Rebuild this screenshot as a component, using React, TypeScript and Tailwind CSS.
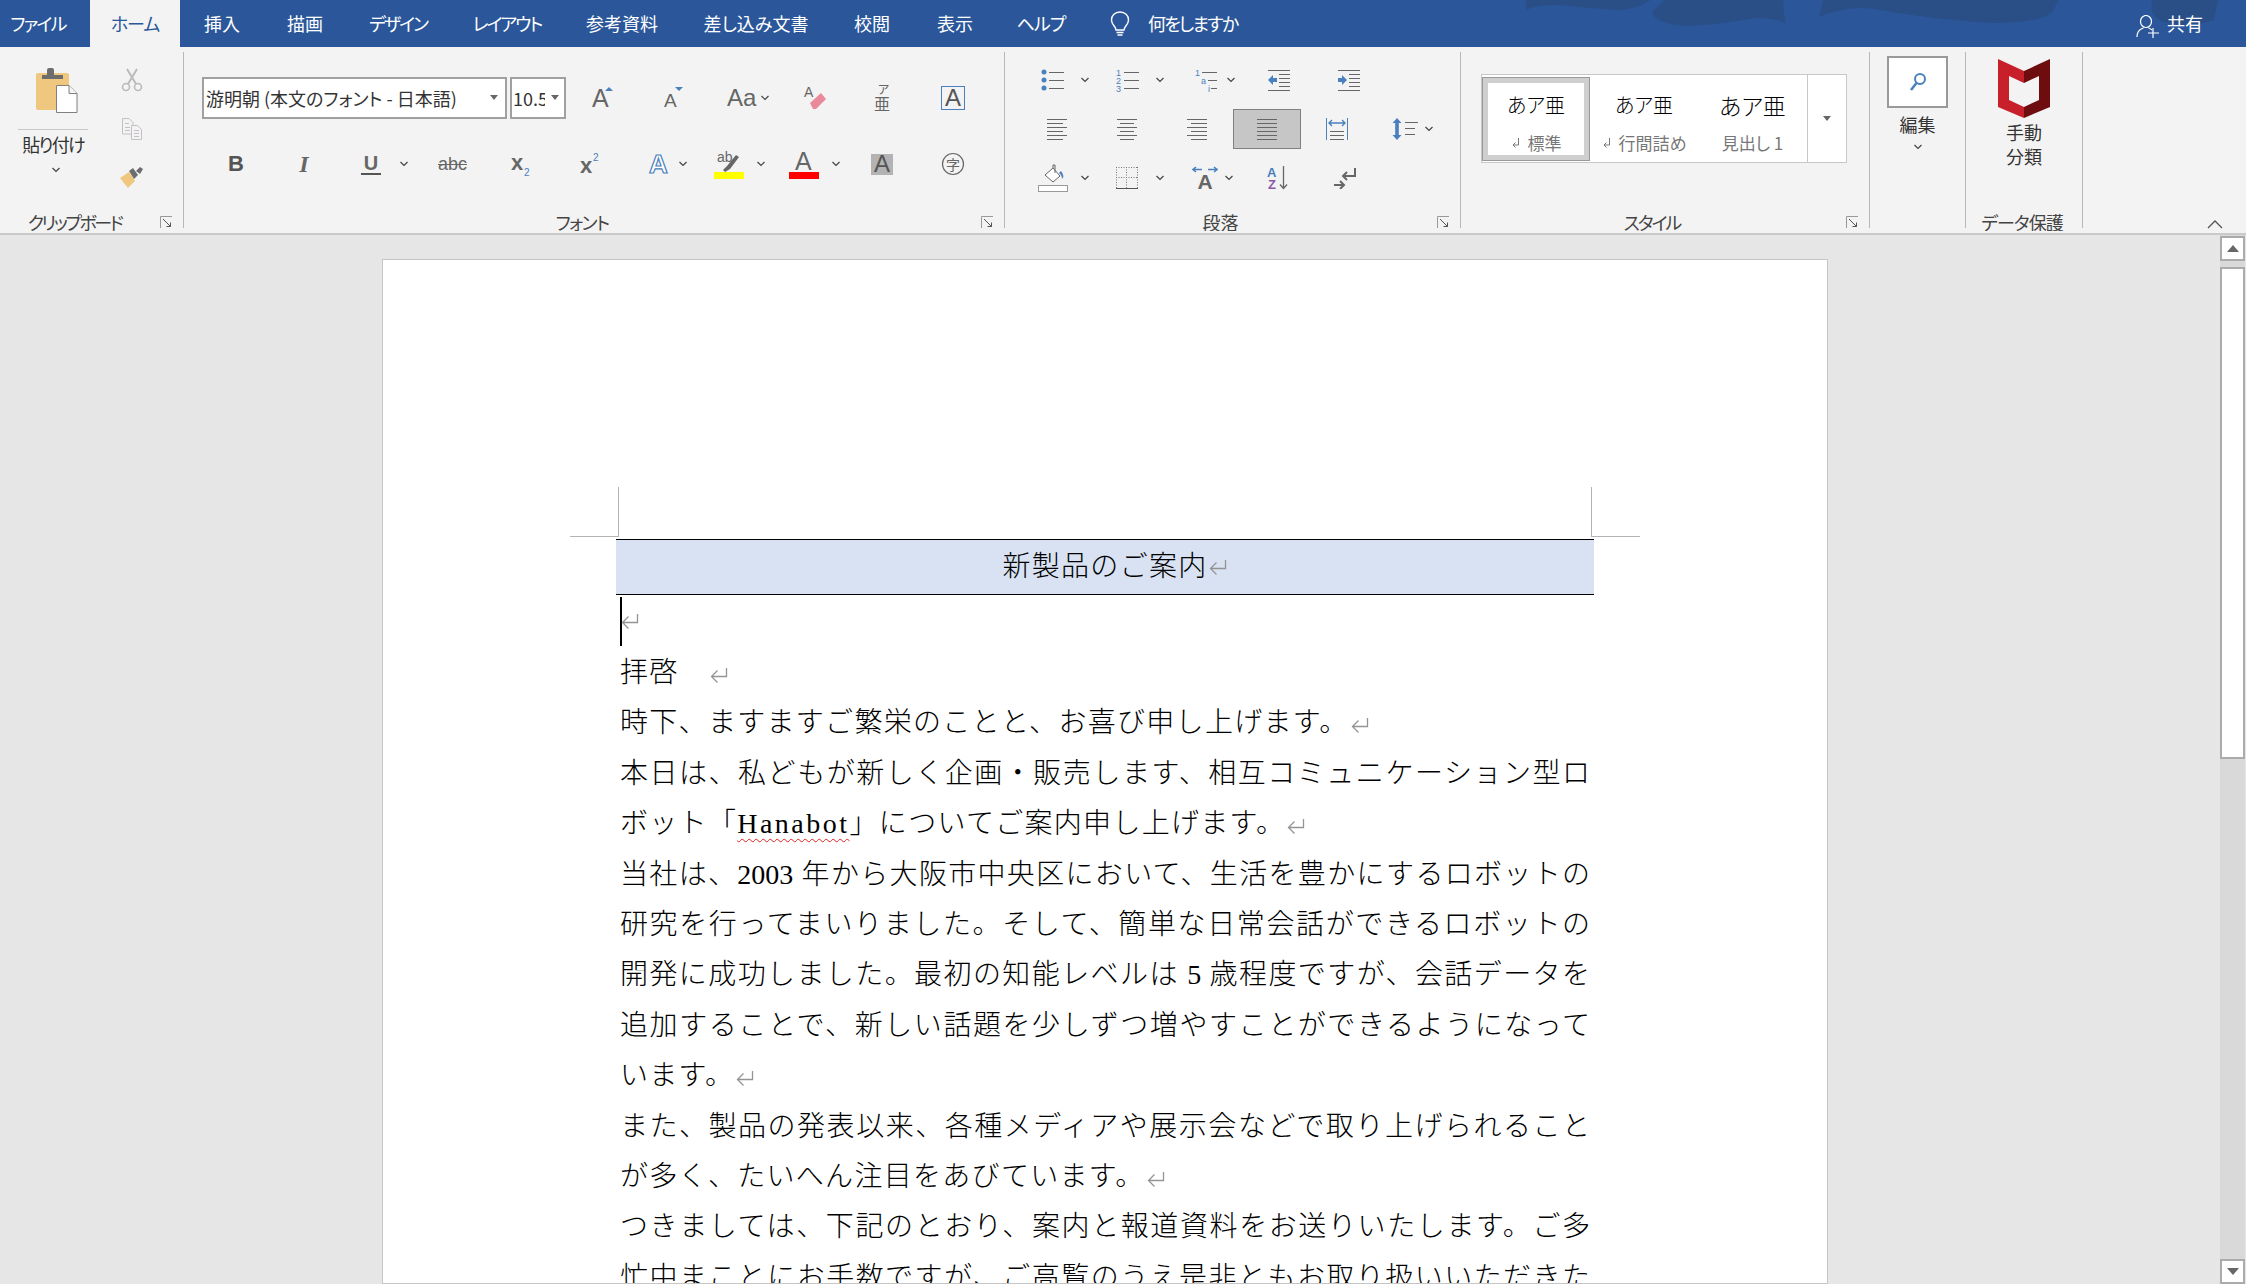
import type { ReactNode } from 'react';

const SANS = 'Liberation Sans';
const CJK = 'Noto Sans CJK JP';
const GRAY = '#666666';
const BLUE = '#4a80bd';

const TABS: { label: string; width: string; active?: boolean }[] = [
  { label: 'ファイル', width: 'w-[76px] mr-[14px] tracking-[-1.8px]' },
  { label: 'ホーム', width: 'w-[90px] tracking-[-1px]', active: true },
  { label: '挿入', width: 'w-[84px]' },
  { label: '描画', width: 'w-[82px]' },
  { label: 'デザイン', width: 'w-[104px] tracking-[-2px]' },
  { label: 'レイアウト', width: 'w-[114px] tracking-[-2px]' },
  { label: '参考資料', width: 'w-[116px]' },
  { label: '差し込み文書', width: 'w-[152px]' },
  { label: '校閲', width: 'w-[80px]' },
  { label: '表示', width: 'w-[86px]' },
  { label: 'ヘルプ', width: 'w-[86px] tracking-[-1px]' },
];

function Chev({ className = '' }: { className?: string }) {
  return (
    <svg width="10" height="6" viewBox="0 0 10 6" className={`shrink-0 ${className}`}>
      <path d="M1.5 1 5 4.5 8.5 1" fill="none" stroke="#444" strokeWidth="1.2" />
    </svg>
  );
}

function Launcher() {
  return (
    <svg width="13" height="13" viewBox="0 0 13 13" className="absolute right-[10px] top-[14px]">
      <path d="M.5 12V.5H12" fill="none" stroke="#999" />
      <path d="M3 3l7.5 7.5M10.5 6.5v4h-4" fill="none" stroke="#555" />
    </svg>
  );
}

function Lines({ short }: { short: [number, number] }) {
  return (
    <svg width="24" height="24" viewBox="0 0 24 24" className="shrink-0">
      {[2, 6, 10, 14, 18, 22].map((y, i) => (
        <path
          key={y}
          d={i % 2 === 0 ? `M2 ${y + 0.5}H22` : `M${short[0]} ${y + 0.5}H${short[1]}`}
          stroke={GRAY}
        />
      ))}
    </svg>
  );
}

function Paste() {
  return (
    <svg width="42" height="46" viewBox="0 0 42 46" className="shrink-0">
      <rect x="0" y="5" width="33" height="37" rx="2" fill="#efc77f" />
      <path d="M6 11V7H11V2Q11 0 13 0H16Q18 0 18 2V7H27V11Z" fill="#6d6d6d" />
      <path d="M20.5 17.5H33L41 25.5V44.5H20.5Z" fill="#fff" stroke="#808080" />
      <path d="M33 17.5V25.5H41" fill="#f3f3f3" stroke="#808080" />
    </svg>
  );
}

function Scissors() {
  return (
    <svg width="22" height="24" viewBox="0 0 22 24" className="shrink-0">
      <circle cx="5" cy="19" r="3.5" fill="none" stroke="#bbb" strokeWidth="1.6" />
      <circle cx="17" cy="19" r="3.5" fill="none" stroke="#bbb" strokeWidth="1.6" />
      <path d="M7 16 16 1M15 16 6 1" stroke="#bbb" strokeWidth="2" />
    </svg>
  );
}

function CopyIcon() {
  return (
    <svg width="22" height="24" viewBox="0 0 22 24" className="shrink-0">
      <path d="M1.5 1.5H8L12 5.5V17H1.5Z" fill="#f3f3f3" stroke="#c4bfc4" />
      <path d="M10.5 8.5H16.5L20.5 12.5V22.5H10.5Z" fill="#f3f3f3" stroke="#c4bfc4" />
      <path d="M4 6.5H8M4 10.5H9M4 13.5H9M13 13.5H18M13 16.5H18M13 19.5H18" stroke="#c4bfc4" />
    </svg>
  );
}

function Brush() {
  return (
    <svg width="24" height="22" viewBox="0 0 24 22" className="shrink-0">
      <path d="M0 11 9 5 15 14 8 21Z" fill="#efc77f" />
      <path d="M9 4 13 1 18 8 14 12Z" fill="#6d6d6d" />
      <path d="M16 4 20 0 23 2 20 7Z" fill="#6d6d6d" />
    </svg>
  );
}

function Triangle({ x, y, down }: { x: number; y: number; down?: boolean }) {
  const d = down ? `M${x} ${y}h8l-4 4z` : `M${x} ${y + 4}h8l-4-4z`;
  return <path d={d} fill={BLUE} />;
}

function Bullets() {
  return (
    <svg width="26" height="22" viewBox="0 0 26 22" className="shrink-0">
      {[3, 11, 19].map((y) => (
        <g key={y}>
          <circle cx="4" cy={y} r="2.5" fill={BLUE} />
          <path d={`M9 ${y + 0.5}H24`} stroke={GRAY} />
        </g>
      ))}
    </svg>
  );
}

function Numbers() {
  return (
    <svg width="26" height="24" viewBox="0 0 26 24" className="shrink-0">
      {['1', '2', '3'].map((n, i) => (
        <g key={n}>
          <text x="1" y={8 + i * 8} fontSize="9" fontFamily={SANS} fill={BLUE}>
            {n}
          </text>
          <path d={`M9 ${4.5 + i * 8}H24`} stroke={GRAY} />
        </g>
      ))}
    </svg>
  );
}

function Multilevel() {
  return (
    <svg width="26" height="24" viewBox="0 0 26 24" className="shrink-0">
      <text x="1" y="8" fontSize="9" fontFamily={SANS} fill={BLUE}>1</text>
      <path d="M8 4.5H23" stroke={GRAY} />
      <text x="7" y="16" fontSize="9" fontFamily={SANS} fill={BLUE}>a</text>
      <path d="M14 12.5H23" stroke={GRAY} />
      <text x="14" y="24" fontSize="9" fontFamily={SANS} fill={BLUE}>i</text>
      <path d="M17 20.5H23" stroke={GRAY} />
    </svg>
  );
}

function Indent({ out }: { out?: boolean }) {
  return (
    <svg width="24" height="24" viewBox="0 0 24 24" className="shrink-0">
      <path d="M1 2.5H23M1 22.5H23M12 6.5H23M12 10.5H23M12 14.5H23M12 18.5H23" stroke={GRAY} />
      {out ? (
        <path d="M1 12 6 7V10H10V14H6V17Z" fill={BLUE} />
      ) : (
        <path d="M10 12 5 7V10H1V14H5V17Z" fill={BLUE} />
      )}
    </svg>
  );
}

function Distributed() {
  return (
    <svg width="24" height="24" viewBox="0 0 24 24" className="shrink-0">
      <path d="M1.5 1V23M22.5 1V23" stroke={BLUE} />
      <path d="M5 14.5H19M5 18.5H19M5 22.5H19" stroke={GRAY} />
      <path d="M4 6H20M7 3 4 6 7 9M17 3 20 6 17 9" fill="none" stroke={BLUE} strokeWidth="1.4" />
    </svg>
  );
}

function LineSpacing() {
  return (
    <svg width="26" height="24" viewBox="0 0 26 24" className="shrink-0">
      <path d="M5 1 9.500 6H6.800V18H9.500L5 23 .5 18H3.200V6H.5Z" fill={BLUE} />
      <path d="M13 5.500H26M13 11.500H23M13 17.500H23" stroke={GRAY} />
    </svg>
  );
}

function Shade() {
  return (
    <svg width="30" height="28" viewBox="0 0 30 28" className="shrink-0">
      <path d="M7 11 15 4 22 12 15 18Z" fill="#fff" stroke={GRAY} />
      <path d="M15 4V1H17V9" fill="none" stroke={GRAY} />
      <path d="M23 7Q27 12 24 15Q24 11 21 9Z" fill={BLUE} />
      <rect x="0.5" y="21.5" width="29" height="6" fill="#fff" stroke="#999" />
    </svg>
  );
}

function Borders() {
  return (
    <svg width="24" height="24" viewBox="0 0 24 24" className="shrink-0">
      <path
        d="M1.5 1V22M22.5 1V22M1 1.5H23M1 11.5H23M11.5 1V22"
        fill="none"
        stroke="#777"
        strokeDasharray="1 1.5"
      />
      <path d="M1 22.5H23" stroke="#555" />
    </svg>
  );
}

function Sort() {
  return (
    <svg width="22" height="24" viewBox="0 0 22 24" className="shrink-0">
      <text x="0" y="11" fontSize="13" fontWeight="700" fontFamily={SANS} fill={BLUE}>A</text>
      <text x="1" y="23" fontSize="13" fontWeight="700" fontFamily={SANS} fill="#8a5aa8">Z</text>
      <path d="M16.5 0V22M13 18.5 16.5 22.5 20 18.5" fill="none" stroke={GRAY} strokeWidth="1.3" />
    </svg>
  );
}

function Rtl() {
  return (
    <svg width="24" height="22" viewBox="0 0 24 22" className="shrink-0">
      <path
        d="M22 1V9H10M14 5 10 9 14 13M1 18H11M7 14 11 18 7 22M1 18"
        fill="none"
        stroke={GRAY}
        strokeWidth="2"
      />
    </svg>
  );
}

function ReturnMark({ className = '' }: { className?: string }) {
  return (
    <svg width="18" height="16" viewBox="0 0 18 16" className={`inline-block align-[-1px] ${className}`}>
      <path d="M16.500 1V9.500H1.500M7.500 3.500 1.500 9.500 7.500 15.500" fill="none" stroke="#949494" strokeWidth="1.3" />
    </svg>
  );
}

function TinyReturn() {
  return (
    <svg width="10" height="12" viewBox="0 0 10 12" className="mr-[7px] inline-block">
      <path d="M7.500 1V8H2M4.500 5.500 2 8 4.500 10.500" fill="none" stroke="#777" />
    </svg>
  );
}

function Group({
  width,
  label,
  labelPad,
  launcher,
  children,
}: {
  width: string;
  label?: string;
  labelPad?: string;
  launcher?: boolean;
  children: ReactNode;
}) {
  return (
    <div className={`flex shrink-0 flex-col ${width}`}>
      <div className="h-[155px]">{children}</div>
      <div
        className={`relative h-[29px] overflow-hidden text-center text-[18px] leading-[40px] text-[#444] ${labelPad ?? ''}`}
      >
        {label}
        {launcher && <Launcher />}
      </div>
    </div>
  );
}

function Sep() {
  return <div className="mt-[5px] h-[176px] w-px shrink-0 bg-[#b8b8b8]" />;
}

function StyleItem({
  sample,
  label,
  mark,
  heading,
}: {
  sample: string;
  label: string;
  mark?: boolean;
  heading?: boolean;
}) {
  return (
    <div className="flex h-full w-full flex-col items-center">
      <div
        className={`font-light text-black ${heading ? 'h-[44px] text-[23px] leading-[44px]' : 'h-[44px] text-[20px] leading-[44px]'}`}
      >
        {sample}
      </div>
      <div className="mt-[4px] flex items-center text-[17px] leading-[24px] text-[#777]">
        {mark && <TinyReturn />}
        {label}
      </div>
    </div>
  );
}

const BODY_LINES: { text: ReactNode; justify?: boolean; mark?: boolean }[] = [
  { text: '拝啓　', mark: true },
  { text: '時下、ますますご繁栄のことと、お喜び申し上げます。', mark: true },
  { text: '本日は、私どもが新しく企画・販売します、相互コミュニケーション型ロ', justify: true },
  {
    text: (
      <>
        ボット「
        <span className="tracking-[2.5px] underline decoration-[#e02020] decoration-wavy decoration-1 underline-offset-[5px]">
          Hanabot
        </span>
        」についてご案内申し上げます。
      </>
    ),
    mark: true,
  },
  { text: '当社は、2003 年から大阪市中央区において、生活を豊かにするロボットの', justify: true },
  { text: '研究を行ってまいりました。そして、簡単な日常会話ができるロボットの', justify: true },
  { text: '開発に成功しました。最初の知能レベルは 5 歳程度ですが、会話データを', justify: true },
  { text: '追加することで、新しい話題を少しずつ増やすことができるようになって', justify: true },
  { text: 'います。', mark: true },
  { text: 'また、製品の発表以来、各種メディアや展示会などで取り上げられること', justify: true },
  { text: 'が多く、たいへん注目をあびています。', mark: true },
  { text: 'つきましては、下記のとおり、案内と報道資料をお送りいたします。ご多', justify: true },
  { text: '忙中まことにお手数ですが、ご高覧のうえ是非ともお取り扱いいただきた', justify: true },
];

export default function App() {
  return (
    <div className="flex h-[1284px] w-[2246px] flex-col overflow-hidden bg-[#e6e6e6] font-['Noto_Sans_CJK_JP',sans-serif] [font-feature-settings:'palt']">
      {/* タブバー */}
      <div className="relative flex h-[47px] shrink-0 bg-[#2b579a] text-[18px] text-white">
        <svg width="746" height="47" viewBox="0 0 746 47" className="absolute right-0 top-0">
          <path
            d="M26 10Q40 3 70 6T120 10Q140 8 150 0H26Z M164 0 152 12Q155 22 176 25T257 18Q275 18 285 23L283 0Z M323 0 319 17Q350 4 380 10T476 22Q535 26 552 12L559 0Z M652 0Q648 18 668 23T714 20L718 0Z"
            fill="#2a4e86"
          />
        </svg>
        {TABS.map((t) => (
          <div
            key={t.label}
            className={`relative flex h-[47px] items-center justify-center ${t.width} ${t.active ? 'bg-[#f3f3f3] text-[#2b579a]' : ''}`}
          >
            {t.label}
          </div>
        ))}
        <div className="relative ml-[26px] flex items-center">
          <svg width="20" height="25" viewBox="0 0 20 25">
            <path
              d="M10 1C5 1 1.500 4.500 1.500 9C1.500 12 3 13.500 4.500 15.500C5.500 17 6 18 6 19H14C14 18 14.500 17 15.500 15.500C17 13.500 18.500 12 18.500 9C18.500 4.500 15 1 10 1Z"
              fill="none"
              stroke="#fff"
              strokeWidth="1.4"
            />
            <path d="M6.500 21.500H13.500M7.500 24H12.500" stroke="#fff" strokeWidth="1.6" />
          </svg>
          <span className="ml-[18px] tracking-[-1.8px]">何をしますか</span>
        </div>
        <div className="relative ml-auto mr-[43px] flex items-center">
          <svg width="23" height="23" viewBox="0 0 23 23" className="mt-[6px]">
            <ellipse cx="10" cy="6.500" rx="5.500" ry="6" fill="none" stroke="#fff" strokeWidth="1.2" />
            <path d="M1 22C1 16.500 4 14 7.500 13M12.500 13C14 13.500 15 14 16 15" fill="none" stroke="#fff" strokeWidth="1.2" />
            <path d="M17 13V23M12 18H23" stroke="#fff" strokeWidth="1.2" />
          </svg>
          <span className="ml-[8px] text-[18px]">共有</span>
        </div>
      </div>

      {/* リボン */}
      <div className="flex h-[188px] shrink-0 border-b-2 border-[#c9c9c9] bg-[#f3f3f3]">
        <Group width="w-[183px]" label="クリップボード" labelPad="pr-[34px] tracking-[-2.5px]" launcher>
          <div className="flex">
            <div className="flex w-[107px] flex-col">
              <div className="ml-[36px] mt-[21px]">
                <Paste />
              </div>
              <div className="ml-[18px] mt-[15px] h-px w-[70px] bg-[#c8c8c8]" />
              <div className="ml-[8px] w-[90px] text-center text-[18px] leading-[28px] tracking-[-1.7px] text-[#333]">
                貼り付け
              </div>
              <Chev className="ml-[51px] mt-[9px]" />
            </div>
            <div className="ml-[13px] flex flex-col items-center pt-[13px]">
              <div className="flex h-[40px] items-center"><Scissors /></div>
              <div className="mt-[9px] flex h-[40px] items-center"><CopyIcon /></div>
              <div className="mt-[9px] flex h-[40px] items-center"><Brush /></div>
            </div>
          </div>
        </Group>
        <Sep />
        <Group width="w-[820px]" label="フォント" labelPad="pr-[24px] tracking-[-1.5px]" launcher>
          <div className="pt-[30px]">
            <div className="flex h-[42px] items-center pl-[18px]">
              <div className="flex h-[42px] w-[305px] items-center justify-between border-2 border-[#a0a0a0] bg-white pl-[2px] pr-[6px] text-[18px] text-[#333]">
                <span>游明朝 (本文のフォント - 日本語)</span>
                <svg width="10" height="6" viewBox="0 0 10 6"><path d="M1 0h8L5 5z" fill="#666" /></svg>
              </div>
              <div className="ml-[3px] flex h-[42px] w-[56px] items-center justify-between border-2 border-[#a0a0a0] bg-white pl-[1px] pr-[4px] text-[18px] text-[#333]">
                <span className="w-[32px] overflow-hidden whitespace-nowrap">10.5</span>
                <svg width="10" height="6" viewBox="0 0 10 6"><path d="M1 0h8L5 5z" fill="#666" /></svg>
              </div>
              <div className="ml-[21px]">
                <svg width="28" height="34" viewBox="0 0 28 34" className="shrink-0">
                  <text x="5" y="26" fontSize="25" fontFamily={SANS} fill={GRAY}>A</text>
                  <Triangle x={18} y={6} />
                </svg>
              </div>
              <div className="ml-[43px]">
                <svg width="26" height="34" viewBox="0 0 26 34" className="shrink-0">
                  <text x="6" y="26" fontSize="19" fontFamily={SANS} fill={GRAY}>A</text>
                  <Triangle x={17} y={6} down />
                </svg>
              </div>
              <span className="ml-[43px] w-[30px] font-['Liberation_Sans',sans-serif] text-[24px] leading-none text-[#666]">Aa</span>
              <Chev className="ml-[3px]" />
              <div className="ml-[33px]">
                <svg width="24" height="26" viewBox="0 0 24 26">
                  <text x="1" y="12" fontSize="14" fontFamily={SANS} fill={GRAY}>A</text>
                  <path d="M7 18 18 8 23 14 13 24 10 24Z" fill="#e98a9b" />
                </svg>
              </div>
              <div className="ml-[46px]">
                <svg width="20" height="28" viewBox="0 0 20 28">
                  <text x="5" y="10" fontSize="12" fontFamily={CJK} fill={GRAY}>ア</text>
                  <text x="1" y="26" fontSize="16" fontFamily={CJK} fill={GRAY}>亜</text>
                </svg>
              </div>
              <div className="ml-[48px] flex h-[24px] w-[24px] items-center justify-center border border-[#4a80bd] font-['Liberation_Sans',sans-serif] text-[24px] leading-none text-[#555]">
                A
              </div>
            </div>
            <div className="mt-[24px] flex h-[42px] items-center">
              <span className="ml-[42px] w-[20px] text-center font-['Liberation_Sans',sans-serif] text-[22px] font-bold leading-none text-[#555]">B</span>
              <span className="ml-[50px] w-[16px] text-center font-['Liberation_Serif',serif] text-[24px] font-bold italic leading-none text-[#666]">I</span>
              <span className="ml-[49px] w-[20px] border-b-2 border-[#555] text-center font-['Liberation_Sans',sans-serif] text-[20px] font-bold leading-[20px] text-[#666]">U</span>
              <Chev className="ml-[18px]" />
              <span className="ml-[29px] w-[26px] text-center font-['Liberation_Sans',sans-serif] text-[18px] leading-none text-[#666] line-through">abc</span>
              <div className="ml-[45px]">
                <svg width="26" height="26" viewBox="0 0 26 26">
                  <text x="2" y="19" fontSize="22" fontWeight="700" fontFamily={SANS} fill={GRAY}>x</text>
                  <text x="15" y="25" fontSize="10" fontFamily={SANS} fill={BLUE}>2</text>
                </svg>
              </div>
              <div className="ml-[43px]">
                <svg width="26" height="26" viewBox="0 0 26 26">
                  <text x="2" y="22" fontSize="22" fontWeight="700" fontFamily={SANS} fill={GRAY}>x</text>
                  <text x="15" y="10" fontSize="10" fontFamily={SANS} fill={BLUE}>2</text>
                </svg>
              </div>
              <div className="ml-[43px]">
                <svg width="24" height="26" viewBox="0 0 24 26">
                  <text x="2" y="22" fontSize="26" fontWeight="700" fontFamily={SANS} fill="#fff" stroke={BLUE} strokeWidth="1.2">A</text>
                </svg>
              </div>
              <Chev className="ml-[7px]" />
              <div className="ml-[26px]">
                <svg width="30" height="30" viewBox="0 0 30 30">
                  <text x="3" y="13" fontSize="14" fontFamily={SANS} fill={GRAY}>ab</text>
                  <path d="M9 21 13 17 22 6 25 8 16 20 11 23Z" fill={GRAY} />
                  <rect x="0" y="23" width="30" height="7" fill="#ffff00" />
                </svg>
              </div>
              <Chev className="ml-[12px]" />
              <div className="ml-[23px]">
                <svg width="30" height="30" viewBox="0 0 30 30">
                  <text x="6" y="21" fontSize="25" fontFamily={SANS} fill={GRAY}>A</text>
                  <rect x="0" y="23" width="30" height="7" fill="#ff0000" />
                </svg>
              </div>
              <Chev className="ml-[12px]" />
              <div className="ml-[30px] flex h-[21px] w-[22px] items-center justify-center bg-[#b3b3b3] font-['Liberation_Sans',sans-serif] text-[24px] leading-none text-[#555]">
                A
              </div>
              <div className="ml-[48px]">
                <svg width="24" height="24" viewBox="0 0 24 24">
                  <circle cx="12" cy="12" r="10.500" fill="none" stroke={GRAY} strokeWidth="1.200" />
                  <text x="12" y="17.500" fontSize="14" textAnchor="middle" fontFamily={CJK} fill={GRAY}>字</text>
                </svg>
              </div>
            </div>
          </div>
        </Group>
        <Sep />
        <Group width="w-[455px]" label="段落" labelPad="pr-[24px]" launcher>
          <div className="pt-[13px]">
            <div className="flex h-[40px] items-center">
              <div className="ml-[35px]"><Bullets /></div>
              <Chev className="ml-[14px]" />
              <div className="ml-[25px]"><Numbers /></div>
              <Chev className="ml-[14px]" />
              <div className="ml-[29px]"><Multilevel /></div>
              <Chev className="ml-[6px]" />
              <div className="ml-[31px]"><Indent out /></div>
              <div className="ml-[46px]"><Indent /></div>
            </div>
            <div className="mt-[9px] flex h-[40px] items-center">
              <div className="ml-[40px]"><Lines short={[2, 18]} /></div>
              <div className="ml-[46px]"><Lines short={[5, 19]} /></div>
              <div className="ml-[46px]"><Lines short={[6, 22]} /></div>
              <div className="ml-[24px] flex h-[40px] w-[68px] items-center justify-center border border-[#808080] bg-[#c6c6c6]">
                <Lines short={[2, 22]} />
              </div>
              <div className="ml-[24px]"><Distributed /></div>
              <div className="ml-[43px]"><LineSpacing /></div>
              <Chev className="ml-[6px]" />
            </div>
            <div className="mt-[9px] flex h-[40px] items-center">
              <div className="ml-[33px]"><Shade /></div>
              <Chev className="ml-[12px]" />
              <div className="ml-[25px]"><Borders /></div>
              <Chev className="ml-[16px]" />
              <div className="ml-[27px]">
                <svg width="26" height="24" viewBox="0 0 26 24">
                  <text x="13" y="23" fontSize="21" fontWeight="700" textAnchor="middle" fontFamily={SANS} fill={GRAY}>A</text>
                  <path d="M1 3.500H10M4 1 1 3.500 4 6M16 3.500H25M22 1 25 3.500 22 6" fill="none" stroke={BLUE} strokeWidth="1.500" />
                </svg>
              </div>
              <Chev className="ml-[6px]" />
              <div className="ml-[33px]"><Sort /></div>
              <div className="ml-[44px]"><Rtl /></div>
            </div>
          </div>
        </Group>
        <Sep />
        <Group width="w-[408px]" label="スタイル" labelPad="pr-[26px] tracking-[-2px]" launcher>
          <div className="pl-[20px] pt-[27px]">
            <div className="flex h-[89px] w-[366px] border border-[#c8c8c8] bg-white">
              <div className="mt-[2px] h-[84px] w-[108px] shrink-0 border border-[#999] bg-white">
                <div className="h-full border-[5px] border-[#cfcfcf]">
                  <StyleItem sample="あア亜" label="標準" mark />
                </div>
              </div>
              <div className="mt-[8px] w-[108px] shrink-0">
                <StyleItem sample="あア亜" label="行間詰め" mark />
              </div>
              <div className="mt-[8px] w-[109px] shrink-0">
                <StyleItem sample="あア亜" label="見出し 1" heading />
              </div>
              <div className="flex flex-1 items-center justify-center border-l border-[#c8c8c8]">
                <svg width="10" height="6" viewBox="0 0 10 6"><path d="M1 0h8L5 5z" fill="#666" /></svg>
              </div>
            </div>
          </div>
        </Group>
        <Sep />
        <Group width="w-[95px]">
          <div className="flex flex-col items-center pt-[9px]">
            <div className="flex h-[52px] w-[61px] items-center justify-center border-2 border-[#999] bg-white">
              <svg width="18" height="20" viewBox="0 0 18 20">
                <circle cx="11" cy="7" r="5" fill="none" stroke={BLUE} strokeWidth="2" />
                <path d="M7.500 11 2 18" stroke={BLUE} strokeWidth="2.500" />
              </svg>
            </div>
            <div className="mt-[2px] text-[18px] leading-[28px] text-[#333]">編集</div>
            <Chev className="mt-[6px]" />
          </div>
        </Group>
        <Sep />
        <Group width="w-[116px]" label="データ保護" labelPad="pr-[4px] tracking-[-1px]">
          <div className="flex flex-col items-center pt-[12px]">
            <svg width="52" height="59" viewBox="0 0 52 59">
              <path d="M0 0 26 12V59L0 48Z" fill="#c8202b" />
              <path d="M52 0 26 12V59L52 48Z" fill="#6e0d10" />
              <path d="M11 17 26 24 41 17V41L26 48 11 41Z" fill="#f3f3f3" />
            </svg>
            <div className="mt-[2px] text-[18px] leading-[24px] text-[#333]">手動</div>
            <div className="text-[18px] leading-[24px] text-[#333]">分類</div>
          </div>
        </Group>
        <Sep />
        <div className="ml-[124px] mt-[173px]">
          <svg width="16" height="9" viewBox="0 0 16 9">
            <path d="M1 8 8 1 15 8" fill="none" stroke="#555" strokeWidth="1.300" />
          </svg>
        </div>
      </div>

      {/* 文書エリア */}
      <div className="flex min-h-0 flex-1">
        <div className="min-w-0 flex-1 pl-[382px] pt-[24px]">
          <div className="h-[1025px] w-[1446px] overflow-hidden border border-[#c6c6c6] bg-white [font-feature-settings:normal]">
            <div className="relative h-[279px]">
              <div className="absolute left-[187px] top-[227px] h-[50px] w-[49px] border-b border-r border-[#b4b4b4]" />
              <div className="absolute left-[1208px] top-[227px] h-[50px] w-[49px] border-b border-l border-[#b4b4b4]" />
            </div>
            <div className="ml-[233px] flex h-[56px] w-[978px] items-center justify-center border-y border-black bg-[#d9e2f3] font-['Liberation_Serif','Noto_Sans_CJK_JP',serif] text-[28px] font-light tracking-[1.3px] text-black">
              <span>新製品のご案内</span>
              <ReturnMark className="-mr-[19px] ml-[1px]" />
            </div>
            <div className="ml-[237px] mt-[1px] w-[970px] font-['Liberation_Serif','Noto_Sans_CJK_JP',serif] text-[28px] font-light leading-[50.4px] text-black">
              <div className="h-[52px]">
                <div className="flex h-[50.4px] items-center">
                  <div className="h-[49px] w-[1.5px] bg-black" />
                  <ReturnMark className="-ml-[1px]" />
                </div>
              </div>
              {BODY_LINES.map((line, i) => (
                <div
                  key={i}
                  className={
                    line.justify
                      ? 'h-[50.4px] overflow-hidden text-justify [text-align-last:justify]'
                      : 'h-[50.4px] tracking-[1.3px]'
                  }
                >
                  {line.text}
                  {line.mark && <ReturnMark className="ml-[2px]" />}
                </div>
              ))}
            </div>
          </div>
        </div>

        {/* スクロールバー */}
        <div className="mr-px flex w-[25px] shrink-0 flex-col bg-[#d9d9d9] pt-px">
          <div className="flex h-[25px] items-center justify-center border-2 border-[#ababab] bg-white">
            <svg width="12" height="7" viewBox="0 0 12 7"><path d="M0 7h12L6 0z" fill="#666" /></svg>
          </div>
          <div className="mt-[6px] h-[492px] border-2 border-[#ababab] bg-white" />
          <div className="flex-1" />
          <div className="flex h-[25px] items-center justify-center border-2 border-[#ababab] bg-white">
            <svg width="12" height="7" viewBox="0 0 12 7"><path d="M0 0h12L6 7z" fill="#666" /></svg>
          </div>
        </div>
      </div>
    </div>
  );
}
